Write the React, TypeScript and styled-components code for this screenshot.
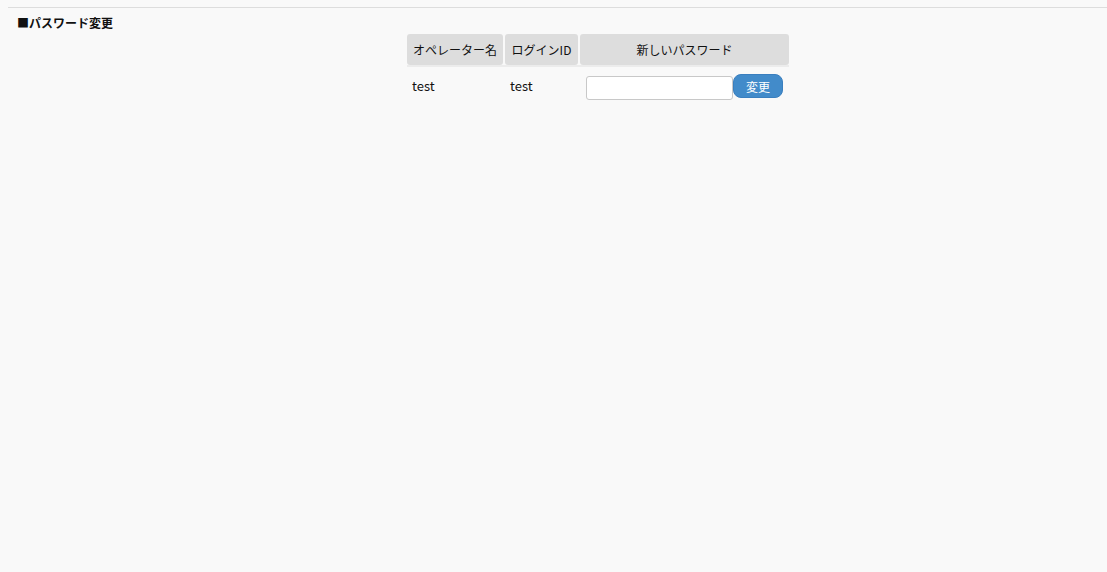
import styled, { createGlobalStyle } from "styled-components";

const GlobalStyle = createGlobalStyle`
  html, body {
    margin: 0;
    padding: 0;
    background: #f9f9f9;
    font-family: "Noto Sans CJK JP", "Noto Sans", sans-serif;
    font-size: 12px;
    color: #111;
  }
`;

const Page = styled.div`
  min-height: 572px;
  padding: 7px 0 0 8px;
  box-sizing: border-box;
`;

const Rule = styled.div`
  border-top: 1px solid #dddddd;
`;

const Title = styled.h2`
  margin: 6px 0 0 9px;
  font-size: 12px;
  font-weight: bold;
  line-height: 17px;
`;

const Content = styled.div`
  display: flex;
  padding-left: 397px;
  margin-top: 3px;
`;

const Table = styled.table`
  border-collapse: separate;
  border-spacing: 2px 0;
`;

const Th = styled.th<{ $w: number }>`
  width: ${(p) => p.$w}px;
  height: 31px;
  padding: 0 5px;
  box-sizing: border-box;
  background: #dddddd;
  border-radius: 3px;
  font-weight: normal;
  font-size: 12px;
  white-space: nowrap;
`;

const Divider = styled.td`
  height: 0;
  padding: 0;
  border-top: 2px solid #ececec;
`;

const Td = styled.td`
  padding: 7px 5px 0;
  height: 30px;
  vertical-align: top;
  font-size: 13px;
  line-height: 24px;
`;

const PasswordCell = styled.div`
  display: flex;
  align-items: flex-start;
  padding-left: 1px;
`;

const Input = styled.input`
  width: 147px;
  height: 24px;
  box-sizing: border-box;
  margin-top: 2px;
  border: 1px solid #c8c8c8;
  border-radius: 3px;
  background: #fff;
`;

const Button = styled.button`
  width: 50px;
  height: 24px;
  border: 1px solid #3a7fbf;
  border-radius: 8px;
  background: #428bca;
  color: #fff;
  font-family: inherit;
  font-size: 12px;
  padding: 0;
`;

export default function App() {
  return (
    <>
      <GlobalStyle />
      <Page>
        <Rule />
        <Title>■パスワード変更</Title>
        <Content>
          <Table>
            <thead>
              <tr>
                <Th $w={96}>オペレーター名</Th>
                <Th $w={73}>ログインID</Th>
                <Th $w={209}>新しいパスワード</Th>
              </tr>
              <tr>
                <Divider colSpan={3} />
              </tr>
            </thead>
            <tbody>
              <tr>
                <Td>test</Td>
                <Td>test</Td>
                <Td>
                  <PasswordCell>
                    <Input type="password" />
                    <Button>変更</Button>
                  </PasswordCell>
                </Td>
              </tr>
            </tbody>
          </Table>
        </Content>
      </Page>
    </>
  );
}
